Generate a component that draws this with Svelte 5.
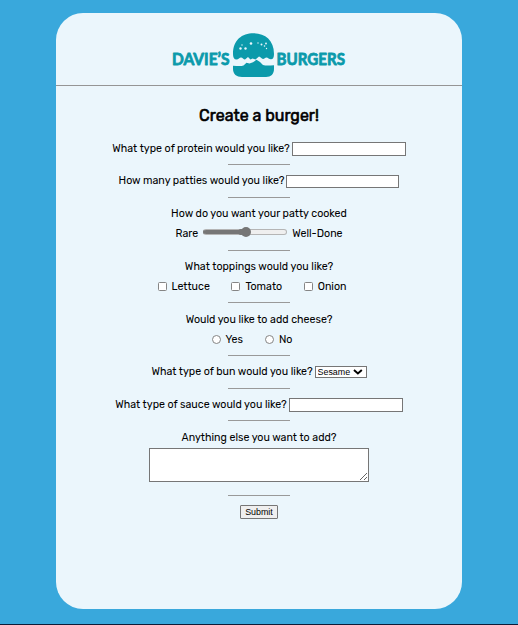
<script>
  let doneness = $state(50);
  const toppings = ['Lettuce', 'Tomato', 'Onion'];
  const buns = ['Sesame', 'Brioche', 'Potato'];
</script>

<div class="page">
  <main class="card">
    <header>
      <svg width="180" height="48" viewBox="0 0 180 48" role="img" aria-label="Davie's Burgers">
        <g class="brand">
          <text x="3" y="34.800" textLength="57.500" lengthAdjust="spacingAndGlyphs">DAVIE’S</text>
          <text x="107.500" y="34.800" textLength="68.500" lengthAdjust="spacingAndGlyphs">BURGERS</text>
        </g>
        <path fill="#0b9aab" d="M64 24C64 10 73 3.300 84.500 3.300S105 10 105 24C105 27.500 104 29.300 102 29.300C100 29.300 99 27.500 97.500 27.500C96 27.500 95.500 29 94 29C92.500 29 91.500 26.500 90 26.500L86.500 29.500L83.500 28.500L81.500 29.500L79 27L76 29.500C74.500 29.500 73.500 27.500 72 27.500C70.500 27.500 69.500 29.500 67.500 29.500C65 29.500 64 27.500 64 24Z" />
        <path fill="#0b9aab" d="M64 35.700C68 36 72 36.500 74.500 35.500L77.500 32.800L80.500 33.500L84 32.300L87.500 29.800L91 32L94 35C97 36 101 35.500 105 35.200V39C105 44 102 47 97 47H73C67.500 47 64 44 64 39Z" />
        <g fill="#eaf6fc">
          <circle cx="71.500" cy="18.500" r="1.200" /><circle cx="76.500" cy="18.500" r="1.200" />
          <circle cx="73" cy="15" r=".7" /><circle cx="82" cy="13.500" r="1.300" />
          <circle cx="89" cy="13" r=".7" /><circle cx="92.500" cy="14.500" r="1" />
          <circle cx="97" cy="13.500" r=".9" /><circle cx="95.500" cy="16" r=".8" />
          <circle cx="97.500" cy="18.500" r=".7" />
        </g>
      </svg>
    </header>
    <h1>Create a burger!</h1>
    <form onsubmit={(e) => e.preventDefault()}>
      <div class="field protein">
        <label class="line"><span>What type of protein would you like?</span><input type="text" /></label>
      </div>
      <div class="field patties">
        <label class="line"><span>How many patties would you like?</span><input type="text" class="short" /></label>
      </div>
      <div class="field cooked">
        <div class="line">How do you want your patty cooked</div>
        <div class="line range"><span>Rare</span><input type="range" bind:value={doneness} /><span>Well-Done</span></div>
      </div>
      <div class="field toppings">
        <div class="line">What toppings would you like?</div>
        <div class="line options">
          {#each toppings as topping}
            <label><input type="checkbox" />{topping}</label>
          {/each}
        </div>
      </div>
      <div class="field cheese">
        <div class="line">Would you like to add cheese?</div>
        <div class="line options">
          <label><input type="radio" name="cheese" />Yes</label>
          <label><input type="radio" name="cheese" />No</label>
        </div>
      </div>
      <div class="field bun">
        <label class="line"><span>What type of bun would you like?</span>
          <span class="select">
            <select>{#each buns as bun}<option>{bun}</option>{/each}</select>
            <svg width="10" height="6" viewBox="0 0 10 6"><path d="M1 1L5 4.500L9 1" fill="none" stroke="#000" stroke-width="2" /></svg>
          </span>
        </label>
      </div>
      <div class="field sauce">
        <label class="line"><span>What type of sauce would you like?</span><input type="text" /></label>
      </div>
      <div class="field extra">
        <div class="line">Anything else you want to add?</div>
        <textarea></textarea>
      </div>
      <button>Submit</button>
    </form>
  </main>
</div>

<style>
  :global(body) { margin: 0; }
  .page {
    box-sizing: border-box;
    height: 625px;
    padding: 13px 56px 0;
    background: #39a8dc;
    border-bottom: 1px solid #0c1c38;
  }
  .card {
    height: 596px;
    border-radius: 27px;
    background: #ebf6fc;
    color: #000;
    font: 10.65px/20px Rubik, Roboto, sans-serif;
  }
  header {
    display: flex;
    justify-content: center;
    box-sizing: border-box;
    height: 73px;
    padding-top: 17px;
    border-bottom: 1px solid #959595;
  }
  header svg { overflow: visible; }
  .brand { font: 700 16.3px Lato, sans-serif; fill: #0b9aab; stroke: #0b9aab; stroke-width: 0.8px; stroke-linejoin: round; }
  h1 {
    margin: 0;
    height: 47px;
    box-sizing: border-box;
    padding-top: 19px;
    text-align: center;
    font: 400 16px/22px Rubik, Roboto, sans-serif;
    -webkit-text-stroke: 0.6px #000;
  }
  form { display: flex; flex-direction: column; align-items: center; }
  .field {
    box-sizing: border-box;
    width: 100%;
    display: flex;
    flex-direction: column;
    align-items: center;
    padding-top: 6px;
    background: linear-gradient(#999, #999) bottom center / 62px 1px no-repeat;
  }
  .protein, .sauce { height: 32px; }
  .patties, .bun { height: 33px; }
  .cooked, .cheese { height: 53px; }
  .toppings { height: 52px; }
  .cheese, .extra { padding-top: 7px; }
  .extra { height: 75px; }
  .line { display: flex; align-items: center; height: 20px; gap: 2px; white-space: nowrap; }
  input[type='text'] {
    box-sizing: border-box;
    width: 114px;
    height: 14px;
    padding: 0 2px;
    border: 1px solid #767676;
    background: #fff;
    outline: 0;
  }
  input.short { width: 113px; height: 13px; }
  .range { gap: 5px; }
  input[type='range'] {
    appearance: none;
    width: 84px;
    height: 10px;
    margin: 0 0 4px;
    background: none;
  }
  input[type='range']::-webkit-slider-runnable-track {
    box-sizing: border-box;
    height: 6px;
    border: 1px solid #b5b5b5;
    border-radius: 3px;
    background: linear-gradient(90deg, #767676 50%, #efefef 50%) border-box;
    border-left-color: #767676;
  }
  input[type='range']::-webkit-slider-thumb {
    appearance: none;
    width: 10px;
    height: 10px;
    margin-top: -3px;
    border-radius: 50%;
    background: #767676;
    box-shadow: -5px 0 0 -2px #767676;
    transform: translateX(1px);
  }
  .options { gap: 22px; padding-right: 14px; }
  .options label { display: flex; align-items: center; gap: 5px; }
  .toppings .options { gap: 21.5px; }
  .options input {
    appearance: none;
    box-sizing: border-box;
    width: 9px;
    height: 9px;
    margin: 0 0 2px;
    border: 1px solid #858585;
    border-radius: 1.5px;
    background: #fff;
  }
  .options input[type='radio'] { border-radius: 50%; }
  .options input:checked { background: #0075ff; }
  .select {
    box-sizing: border-box;
    display: flex;
    align-items: center;
    justify-content: space-between;
    width: 52px;
    height: 12px;
    padding: 0 3px 0 2px;
    border: 1px solid #767676;
    background: #fff;
  }
  select {
    appearance: none;
    width: 36px;
    height: 10px;
    padding: 0;
    border: 0;
    background: none;
    color: #000;
    font: 8.9px/10px 'Liberation Sans', sans-serif;
  }
  textarea {
    box-sizing: border-box;
    width: 220px;
    height: 34px;
    margin: 0;
    padding: 2px;
    border: 1px solid #767676;
    background: #fff;
  }
  button {
    width: 38px;
    height: 14px;
    margin-top: 9px;
    padding: 0;
    border: 1px solid #767676;
    border-radius: 1px;
    background: #efefef;
    color: #000;
    font: 8.9px/12px 'Liberation Sans', sans-serif;
  }
</style>
